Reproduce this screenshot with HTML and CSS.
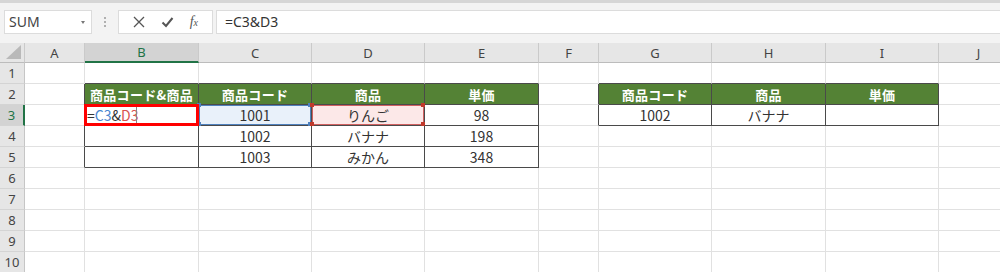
FILE: index.html
```html
<!DOCTYPE html>
<html lang="ja">
<head>
    <meta charset="UTF-8" />
    <title>Excel - 商品コード&商品</title>
    <link rel="stylesheet" href="styles.css">
</head>
<body>

<div class="topline"></div>

<div class="formula-bar">
    <div class="namebox">
        <span>SUM</span>
        <span class="arrow"></span>
    </div>
    <div class="grip"><i></i><i></i><i></i></div>
    <div class="fbuttons">
        <svg class="ico" width="12" height="12" viewBox="0 0 12 12"><path d="M1 1 L11 11 M11 1 L1 11" stroke="#555" stroke-width="1.3" fill="none"/></svg>
        <svg class="ico" width="13" height="12" viewBox="0 0 13 12"><path d="M1.5 6.5 L5 10 L11.5 2" stroke="#555" stroke-width="2" fill="none"/></svg>
        <span class="fx">f<sub>x</sub></span>
    </div>
    <div class="finput">=C3&amp;D3</div>
</div>

<table class="sheet">
    <colgroup>
        <col style="width:25px"><col style="width:60px"><col style="width:114px"><col style="width:113px">
        <col style="width:113px"><col style="width:114px"><col style="width:60px"><col style="width:113px">
        <col style="width:114px"><col style="width:113px"><col style="width:80px">
    </colgroup>
    <tr class="colhead">
        <th class="corner"><span class="tri"></span></th>
        <th>A</th><th class="sel">B</th><th>C</th><th>D</th><th>E</th><th>F</th><th>G</th><th>H</th><th>I</th><th>J</th>
    </tr>
    <tr>
        <td class="rh">1</td>
        <td></td><td class="tt"></td><td class="tt"></td><td class="tt"></td><td class="tt"></td>
        <td></td><td class="tt"></td><td class="tt"></td><td class="tt"></td><td></td>
    </tr>
    <tr>
        <td class="rh">2</td>
        <td class="tl"></td>
        <td class="t hd">商品コード&amp;商品</td><td class="t hd">商品コード</td><td class="t hd">商品</td><td class="t hd">単価</td>
        <td class="tl"></td>
        <td class="t hd">商品コード</td><td class="t hd">商品</td><td class="t hd">単価</td>
        <td></td>
    </tr>
    <tr>
        <td class="rh sel">3</td>
        <td class="tl"></td>
        <td class="t edit"><span class="ed">=<span class="ref-c">C3</span>&amp;<span class="ref-d">D3</span></span><span class="caret"></span><div class="active"></div></td>
        <td class="t ref-box blue">1001<i class="h tl-h"></i><i class="h tr-h"></i><i class="h bl-h"></i><i class="h br-h"></i></td>
        <td class="t ref-box red">りんご<i class="h tl-h"></i><i class="h tr-h"></i><i class="h bl-h"></i><i class="h br-h"></i></td>
        <td class="t">98</td>
        <td class="tl"></td>
        <td class="t">1002</td><td class="t">バナナ</td><td class="t"></td>
        <td></td>
    </tr>
    <tr>
        <td class="rh">4</td>
        <td class="tl"></td>
        <td class="t"></td><td class="t">1002</td><td class="t">バナナ</td><td class="t">198</td>
        <td></td><td></td><td></td><td></td><td></td>
    </tr>
    <tr>
        <td class="rh">5</td>
        <td class="tl"></td>
        <td class="t"></td><td class="t">1003</td><td class="t">みかん</td><td class="t">348</td>
        <td></td><td></td><td></td><td></td><td></td>
    </tr>
    <tr><td class="rh">6</td><td></td><td></td><td></td><td></td><td></td><td></td><td></td><td></td><td></td><td></td></tr>
    <tr><td class="rh">7</td><td></td><td></td><td></td><td></td><td></td><td></td><td></td><td></td><td></td><td></td></tr>
    <tr><td class="rh">8</td><td></td><td></td><td></td><td></td><td></td><td></td><td></td><td></td><td></td><td></td></tr>
    <tr><td class="rh">9</td><td></td><td></td><td></td><td></td><td></td><td></td><td></td><td></td><td></td><td></td></tr>
    <tr><td class="rh">10</td><td></td><td></td><td></td><td></td><td></td><td></td><td></td><td></td><td></td><td></td></tr>
</table>

</body>
</html>
```

FILE: styles.css
```css
body {
    margin: 0;
    background: #fff;
    overflow: hidden;
    font-family: "Noto Sans", "Noto Sans CJK JP", sans-serif;
    color: #333;
}
.topline {
    height: 3px;
    background: #d6d6d6;
}
.formula-bar {
    display: flex;
    align-items: flex-start;
    height: 40px;
    box-sizing: border-box;
    padding: 7px 0 0 4px;
    background: #f3f3f3;
}
.namebox {
    position: relative;
    width: 88px;
    height: 24px;
    box-sizing: border-box;
    background: #fff;
    border: 1px solid #dcdcdc;
    font-size: 14px;
    line-height: 22px;
    padding-left: 4px;
    color: #444;
}
.arrow {
    position: absolute;
    right: 6px;
    top: 10px;
    border-left: 2px solid transparent;
    border-right: 2px solid transparent;
    border-top: 3px solid #777;
}
.grip {
    width: 26px;
    height: 24px;
    display: flex;
    flex-direction: column;
    align-items: center;
    justify-content: center;
    gap: 2px;
}
.grip i {
    width: 2px;
    height: 2px;
    background: #b0b0b0;
}
.fbuttons {
    width: 95px;
    height: 24px;
    box-sizing: border-box;
    background: #fff;
    border: 1px solid #dcdcdc;
    display: flex;
    align-items: center;
    justify-content: space-around;
    padding: 0 6px;
}
.fx {
    font-family: "Liberation Serif", serif;
    font-style: italic;
    font-size: 14px;
    color: #555;
    line-height: 1;
}
.fx sub {
    font-size: 10px;
    vertical-align: 0;
}
.finput {
    flex: 1;
    margin-left: 3px;
    height: 24px;
    box-sizing: border-box;
    background: #fff;
    border: 1px solid #dcdcdc;
    border-right: none;
    font-size: 14px;
    line-height: 22px;
    padding-left: 8px;
    color: #333;
}

.sheet {
    border-collapse: separate;
    border-spacing: 0;
    table-layout: fixed;
    width: 1019px;
}
.sheet th,
.sheet td {
    box-sizing: border-box;
    padding: 0;
    text-align: center;
    vertical-align: middle;
    white-space: nowrap;
    overflow: visible;
}
.colhead th {
    height: 20px;
    background: #e6e6e6;
    border-right: 1px solid #cacaca;
    border-bottom: 1px solid #bcbcbc;
    font-weight: normal;
    font-size: 13px;
    color: #444;
}
.colhead th.sel {
    background: #d3d3d3;
    color: #217346;
    border-bottom: 2px solid #217346;
}
.corner {
    position: relative;
}
.tri {
    position: absolute;
    right: 3px;
    bottom: 3px;
    width: 0;
    height: 0;
    border-left: 15px solid transparent;
    border-bottom: 14px solid #b9b9b9;
}
.sheet td {
    height: 21px;
    border-right: 1px solid #e1e1e1;
    border-bottom: 1px solid #e1e1e1;
    font-family: "Noto Sans CJK JP", sans-serif;
    font-size: 14px;
    color: #333;
    position: relative;
}
.sheet td.rh {
    background: #e6e6e6;
    border-right: 1px solid #c6c6c6;
    border-bottom: 1px solid #d4d4d4;
    font-family: "Noto Sans", sans-serif;
    font-size: 13px;
    color: #444;
}
.sheet td.rh.sel {
    background: #d3d3d3;
    color: #217346;
    border-right: 2px solid #217346;
}

/* table borders */
.sheet td.tt { border-bottom-color: #4a4a4a; }
.sheet td.tl { border-right-color: #4a4a4a; }
.sheet td.t {
    border-right-color: #4a4a4a;
    border-bottom-color: #4a4a4a;
}
.sheet td.hd {
    background: #548235;
    color: #fff;
    font-weight: bold;
    font-size: 13px;
    letter-spacing: 0.3px;
}

/* editing cell */
.sheet td.edit {
    text-align: left;
    padding-left: 2px;
}
.ref-c { color: #4a86d0; }
.ref-d { color: #d9534f; }
.caret {
    position: absolute;
    left: 51px;
    top: 2px;
    width: 1px;
    height: 18px;
    background: #888;
}
.active {
    position: absolute;
    left: -1px;
    top: -1px;
    right: -1px;
    bottom: -1px;
    border: 3px solid #ff0000;
    z-index: 2;
}

/* referenced cells */
.sheet td.ref-box.blue {
    background: #e9f1fa;
    box-shadow: inset 0 0 0 1px #4f81bd;
}
.sheet td.ref-box.red {
    background: #fce8e8;
    box-shadow: inset 0 0 0 1px #d06060;
}
.h {
    position: absolute;
    width: 4px;
    height: 4px;
    z-index: 1;
}
.blue .h { background: #4f81bd; }
.red .h { background: #c0392b; }
.tl-h { left: -2px; top: -2px; }
.tr-h { right: -1px; top: -2px; }
.bl-h { left: -2px; bottom: -1px; }
.br-h { right: -1px; bottom: -1px; }
```
